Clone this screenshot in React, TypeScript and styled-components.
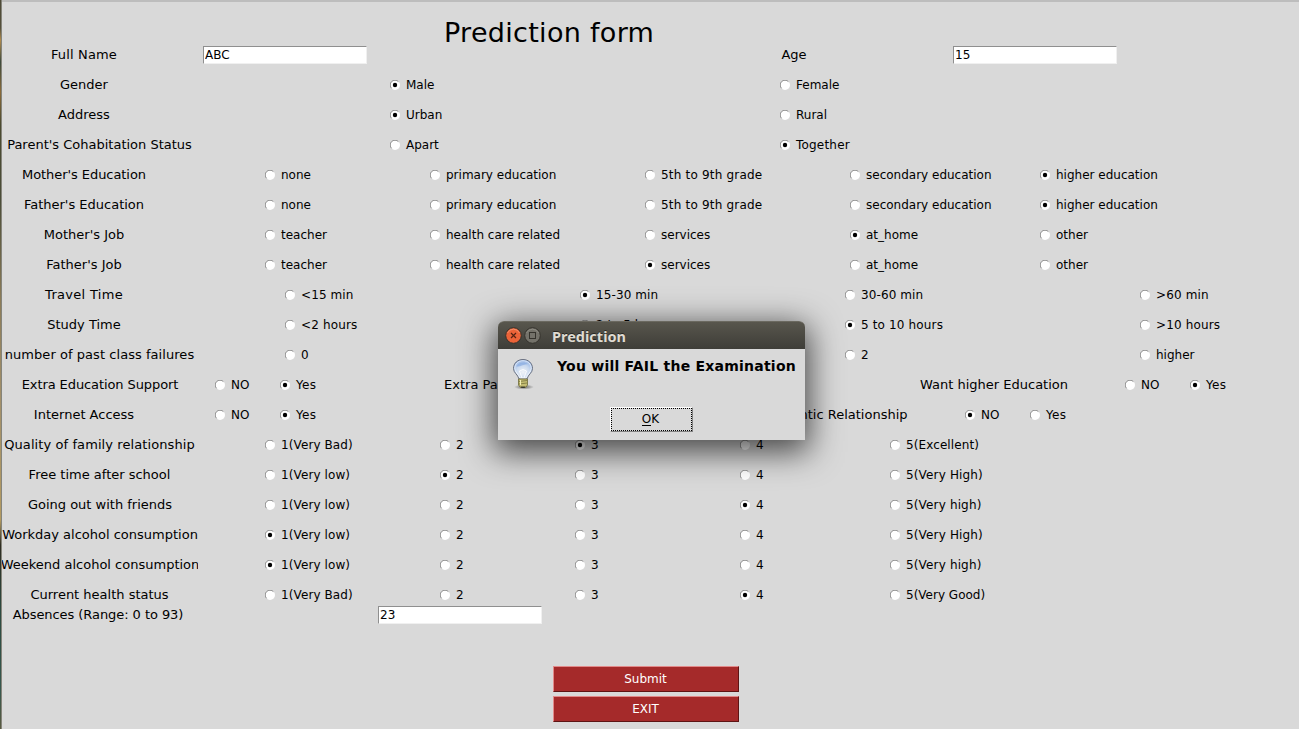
import React from 'react';
import styled, { createGlobalStyle } from 'styled-components';

const GlobalStyle = createGlobalStyle`
  html, body { margin: 0; padding: 0; overflow: hidden; }
  * { box-sizing: border-box; }
`;

const Screen = styled.div`
  position: relative;
  width: 1299px;
  height: 729px;
  overflow: hidden;
  display: flex;
  background: #d9d9d9;
  color: #000;
  font-family: 'DejaVu Sans', sans-serif;
  font-size: 12px;
`;

const DesktopEdge = styled.div`
  width: 2px;
  flex: none;
  border-right: 1px solid #85847a;
  background: linear-gradient(#4d4a36 0, #55503a 28px, #b08a4c 40px, #3d4a3c 62px, #8a6a38 92px, #4a4a30 125px,
    #4b4d38 200px, #8c7c58 300px, #a3906a 400px, #b39a60 520px, #2e2d22 545px, #2c4a40 610px, #37584e 690px, #5a5a40 729px);
`;

const Form = styled.form`
  flex: 1;
  display: flex;
  flex-direction: column;
  border-top: 2px solid #bdbdbd;
`;

const Title = styled.h1`
  margin: 0;
  padding: 14px 0 0 442px;
  height: 43px;
  font-size: 27px;
  line-height: 34px;
  font-weight: 400;
  letter-spacing: 0.3px;
  white-space: nowrap;
`;

const Rows = styled.div`
  display: flex;
  flex-direction: column;
`;

const Row = styled.div<{ $columns: string }>`
  display: grid;
  grid-template-columns: ${p => p.$columns};
  align-items: center;
  height: 20px;
  margin-bottom: 10px;
  &:nth-last-child(-n + 2) { margin-bottom: 0; }
`;

const Label = styled.span<{ $width: number; $spacing: number }>`
  display: flex;
  justify-content: center;
  width: ${p => p.$width}px;
  height: 20px;
  overflow: hidden;
  font-size: 13px;
  line-height: 19px;
  letter-spacing: ${p => p.$spacing}px;
  white-space: nowrap;
`;

const Option = styled.label<{ $spacing: number }>`
  display: flex;
  align-items: center;
  gap: 6px;
  height: 20px;
  line-height: 19px;
  letter-spacing: ${p => p.$spacing}px;
  white-space: nowrap;
`;

const Dot = styled.svg`
  flex: none;
  width: 10px;
  height: 10px;
`;

const Entry = styled.input`
  width: 164px;
  height: 18px;
  padding: 0 1px 1px;
  border: 1px solid;
  border-color: #8f8f8f #f0f0f0 #f0f0f0 #8f8f8f;
  border-radius: 0;
  outline: 0;
  background: #fff;
  color: #000;
  font: 12px 'DejaVu Sans', sans-serif;
`;

const Actions = styled.div`
  display: flex;
  flex-direction: column;
  gap: 4px;
  padding: 41px 0 0 551px;
`;

const ActionButton = styled.button`
  width: 186px;
  height: 26px;
  padding: 0 1px 0 0;
  border: 1px solid;
  border-color: #e28a8a #5e1414 #5e1414 #e28a8a;
  background: #a52a2a;
  color: #fff;
  font: 12px 'DejaVu Sans', sans-serif;
`;

const Dialog = styled.section`
  position: absolute;
  left: 498px;
  top: 321px;
  width: 307px;
  height: 119px;
  border-radius: 6px 6px 0 0;
  background: #d9d9d9;
  box-shadow: 0 8px 32px 4px rgba(0, 0, 0, 0.68);
`;

const TitleBar = styled.header`
  display: flex;
  align-items: center;
  gap: 2px;
  height: 28px;
  padding-left: 7px;
  border-radius: 6px 6px 0 0;
  border-top: 1px solid #6b6960;
  background: linear-gradient(#58564d, #3e3d38);
  color: #dfdbd2;
  font-family: 'Noto Sans', sans-serif;
  font-size: 14.5px;
  font-weight: 700;
`;

const WindowIcon = styled.svg`
  flex: none;
  width: 17px;
  height: 17px;
`;

const DialogTitle = styled.span`
  margin-left: 9px;
  line-height: 26px;
  text-shadow: 0 -1px rgba(0, 0, 0, 0.5);
`;

const Message = styled.div`
  display: flex;
  padding: 8px 0 0 12px;
  gap: 21px;
  font-size: 14px;
  line-height: 18px;
  font-weight: 700;
  letter-spacing: 0.23px;
  white-space: nowrap;
`;

const OkButton = styled.button`
  display: block;
  width: 83px;
  height: 25px;
  margin: 16px 0 0 112px;
  padding: 0;
  border: 1px solid;
  border-color: #fff #828282 #828282 #fff;
  background: #d9d9d9;
  color: #000;
  font: 12px 'DejaVu Sans', sans-serif;
`;

const FocusRing = styled.span`
  display: block;
  height: 23px;
  padding-right: 2px;
  border: 1px dotted #000;
  line-height: 20px;
`;

const Mnemonic = styled.span`
  display: inline-block;
  height: 15px;
  line-height: 16px;
  border-bottom: 1px solid #000;
`;

function Radio({ on }: { on?: boolean }) {
  return (
    <Dot viewBox="0 0 10 10">
      <circle cx="5" cy="5" r="5" fill="#fff" />
      <path d="M1.6 8.400A4.700 4.700 0 0 1 8.400 1.600" fill="none" stroke="#7c7c7c" strokeWidth="0.9" />
      {on && <circle cx="5" cy="5" r="2.200" fill="#000" />}
    </Dot>
  );
}

type Item =
  | { x: number; kind: 'label'; text: string; w: number }
  | { x: number; kind: 'radio'; text: string; on: boolean }
  | { x: number; kind: 'entry'; text: string };

const lab = (text: string, w = 164, x = 2): Item => ({ x, kind: 'label', text, w });
const entry = (x: number, text: string): Item => ({ x, kind: 'entry', text });
const radios = (xs: number[], texts: string[], chosen: number): Item[] =>
  texts.map((text, i) => ({ x: xs[i], kind: 'radio', text, on: i === chosen }));

const spacing: Record<string, number> = {
  'Full Name': 0.15,
  'Travel Time': 0.3,
  'Quality of family relationship': 0.09,
  'number of past class failures': 0.05,
  'Extra Education Support': -0.09,
  'Absences (Range: 0 to 93)': -0.06,
  "Mother's Education": -0.06,
  '5th to 9th grade': 0.19,
  Together: 0.2,
  '<15 min': 0.1,
  '15-30 min': 0.1,
  '30-60 min': 0.1,
  '<2 hours': 0.15,
  '5 to 10 hours': 0.15,
  '>10 hours': 0.15,
  '>60 min': 0.15,
  '1(Very Bad)': 0.1,
  '1(Very low)': 0.1,
  '5(Very High)': 0.15,
  '5(Very high)': 0.15,
  '5(Excellent)': 0.1,
  Yes: 0.3,
};

const two = [390, 780];
const five = [265, 430, 645, 850, 1040];
const four = [285, 580, 845, 1140];
const scale = [265, 440, 575, 740, 890];
const education = ['none', 'primary education', '5th to 9th grade', 'secondary education', 'higher education'];
const jobs = ['teacher', 'health care related', 'services', 'at_home', 'other'];

const rows: Item[][] = [
  [lab('Full Name'), entry(203, 'ABC'), lab('Age', 26, 781), entry(953, '15')],
  [lab('Gender'), ...radios(two, ['Male', 'Female'], 0)],
  [lab('Address'), ...radios(two, ['Urban', 'Rural'], 0)],
  [lab("Parent's Cohabitation Status", 195), ...radios(two, ['Apart', 'Together'], 1)],
  [lab("Mother's Education"), ...radios(five, education, 4)],
  [lab("Father's Education"), ...radios(five, education, 4)],
  [lab("Mother's Job"), ...radios(five, jobs, 3)],
  [lab("Father's Job"), ...radios(five, jobs, 2)],
  [lab('Travel Time'), ...radios(four, ['<15 min', '15-30 min', '30-60 min', '>60 min'], 1)],
  [lab('Study Time'), ...radios(four, ['<2 hours', '2 to 5 hours', '5 to 10 hours', '>10 hours'], 2)],
  [lab('number of past class failures', 195), ...radios([285, 845, 1140], ['0', '2', 'higher'], -1)],
  [
    lab('Extra Education Support', 196),
    ...radios([215, 280], ['NO', 'Yes'], 1),
    lab('Extra Paid Class', 136, 428),
    lab('Want higher Education', 164, 912),
    ...radios([1125, 1190], ['NO', 'Yes'], 1),
  ],
  [
    lab('Internet Access'),
    ...radios([215, 280], ['NO', 'Yes'], 1),
    lab('Romantic Relationship', 164, 753),
    ...radios([965, 1030], ['NO', 'Yes'], 0),
  ],
  [lab('Quality of family relationship', 195), ...radios(scale, ['1(Very Bad)', '2', '3', '4', '5(Excellent)'], 2)],
  [lab('Free time after school', 195), ...radios(scale, ['1(Very low)', '2', '3', '4', '5(Very High)'], 1)],
  [lab('Going out with friends', 196), ...radios(scale, ['1(Very low)', '2', '3', '4', '5(Very high)'], 3)],
  [lab('Workday alcohol consumption', 196), ...radios(scale, ['1(Very low)', '2', '3', '4', '5(Very High)'], 0)],
  [lab('Weekend alcohol consumption', 196), ...radios(scale, ['1(Very low)', '2', '3', '4', '5(Very high)'], 0)],
  [lab('Current health status', 195), ...radios(scale, ['1(Very Bad)', '2', '3', '4', '5(Very Good)'], 3)],
  [lab('Absences (Range: 0 to 93)', 192), entry(378, '23')],
];

const columnsOf = (items: Item[]) =>
  items.map((it, i) => (i + 1 < items.length ? `${items[i + 1].x - it.x}px` : '1fr')).join(' ');

function Cell({ item }: { item: Item }) {
  const gap = spacing[item.text] ?? 0;
  if (item.kind === 'label') return <Label $width={item.w} $spacing={gap}>{item.text}</Label>;
  if (item.kind === 'entry') return <Entry defaultValue={item.text} />;
  return (
    <Option $spacing={gap}>
      <Radio on={item.on} />
      {item.text}
    </Option>
  );
}

function Bulb() {
  return (
    <svg width="26" height="34" viewBox="0 0 26 34">
      <defs>
        <radialGradient id="glass" cx="0.5" cy="0.65" r="0.65">
          <stop offset="0" stopColor="#f0f3f7" />
          <stop offset="0.55" stopColor="#c8d8ee" />
          <stop offset="1" stopColor="#8eb0e4" />
        </radialGradient>
        <radialGradient id="shade">
          <stop offset="0" stopColor="#000" stopOpacity="0.55" />
          <stop offset="1" stopColor="#000" stopOpacity="0" />
        </radialGradient>
      </defs>
      <ellipse cx="14" cy="30" rx="10" ry="2.6" fill="url(#shade)" />
      <path
        d="M13 2.500C7.500 2.500 3.500 6.300 3.500 11.500C3.500 16 8 17.500 9 22H17C18 17.500 22.500 16 22.500 11.500C22.500 6.300 18.500 2.500 13 2.500Z"
        fill="url(#glass)"
        stroke="#6b7180"
      />
      <path d="M13 3.700C8.300 3.700 4.800 7 4.800 11.400C4.800 15 8.500 17 10 21H16C17.500 17 21.200 15 21.200 11.400C21.200 7 17.700 3.700 13 3.700Z" fill="none" stroke="#fff" strokeOpacity="0.65" />
      <path d="M6.500 9.500C8 5.500 14 4 18 7C14 7 10 10 6.500 9.500Z" fill="#7ea5df" fillOpacity="0.6" />
      <path d="M9.500 14L12 21M16.500 14L14 21M9.500 14L13 12.500L16.500 14" fill="none" stroke="#fff" strokeOpacity="0.8" />
      <path d="M8.500 22H17.500V28L15.500 30.500H10.500L8.500 28Z" fill="#c4bd72" stroke="#6c6836" strokeWidth="0.8" />
      <path d="M9 24.500L17 23.500M9 27L17 26" stroke="#77733d" strokeWidth="0.8" />
      <path d="M10.500 23V28" stroke="#f3efb8" />
      <path d="M10.500 29.500H15.500L14.500 31H11.500Z" fill="#38382e" />
    </svg>
  );
}

export default function App() {
  return (
    <Screen>
      <GlobalStyle />
      <DesktopEdge />
      <Form onSubmit={e => e.preventDefault()}>
        <Title>Prediction form</Title>
        <Rows>
          {rows.map((items, i) => (
            <Row key={i} $columns={columnsOf(items)}>
              {items.map((item, j) => (
                <Cell key={j} item={item} />
              ))}
            </Row>
          ))}
        </Rows>
        <Actions>
          <ActionButton>Submit</ActionButton>
          <ActionButton>EXIT</ActionButton>
        </Actions>
      </Form>
      <Dialog>
        <TitleBar>
          <WindowIcon viewBox="0 0 17 17">
            <circle cx="8.500" cy="8.500" r="7.800" fill="#ec6338" stroke="#35332d" />
            <path d="M2.500 6A6.600 6.600 0 0 1 14.500 6" fill="none" stroke="#f5906c" />
            <path d="M6 6L11 11M11 6L6 11" stroke="#552313" strokeWidth="1.200" />
          </WindowIcon>
          <WindowIcon viewBox="0 0 17 17">
            <circle cx="8.500" cy="8.500" r="7.800" fill="#74726a" stroke="#35332d" />
            <path d="M2.500 6A6.600 6.600 0 0 1 14.500 6" fill="none" stroke="#8c8a81" />
            <rect x="5.500" y="5.500" width="6" height="6" fill="none" stroke="#35332d" />
          </WindowIcon>
          <DialogTitle>Prediction</DialogTitle>
        </TitleBar>
        <Message>
          <Bulb />
          <span>You will FAIL the Examination</span>
        </Message>
        <OkButton>
          <FocusRing>
            <Mnemonic>O</Mnemonic>K
          </FocusRing>
        </OkButton>
      </Dialog>
    </Screen>
  );
}
